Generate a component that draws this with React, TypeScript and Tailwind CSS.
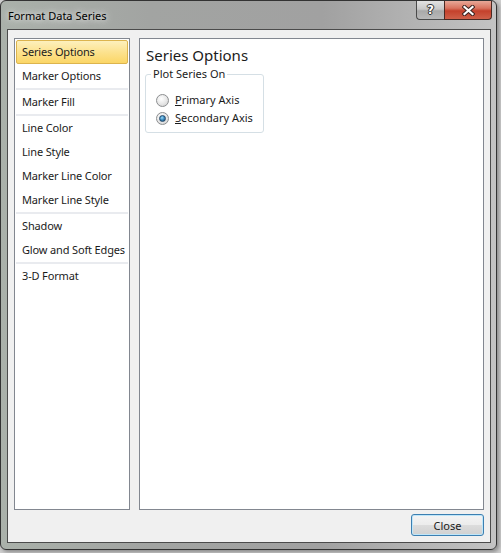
const navItems = [
  { label: "Series Options", sep: false },
  { label: "Marker Options", sep: true },
  { label: "Marker Fill", sep: true },
  { label: "Line Color", sep: false },
  { label: "Line Style", sep: false },
  { label: "Marker Line Color", sep: false },
  { label: "Marker Line Style", sep: true },
  { label: "Shadow", sep: false },
  { label: "Glow and Soft Edges", sep: true },
  { label: "3-D Format", sep: false },
];

const Radio = ({ checked }: { checked?: boolean }) => (
  <div className="w-[13px] h-[13px] rounded-full border border-[#8c8e90] bg-[radial-gradient(circle_at_40%_35%,#ffffff_0%,#e6e6e6_55%,#c9c9c9_100%)] flex items-center justify-center">
    {checked && (
      <div className="w-[7px] h-[7px] rounded-full border border-[#24496a] bg-[radial-gradient(circle_at_40%_35%,#9fdcf8_0%,#3f8fc4_45%,#17476e_100%)]" />
    )}
  </div>
);

export default function App() {
  return (
    <div className="w-[501px] h-[553px] bg-[#cfcfcf] font-['Noto_Sans','Open_Sans',sans-serif] text-[11px] text-[#1b1b1b]">
      <div className="w-[497px] h-[550px] rounded-[6px] border border-[#333333] bg-[linear-gradient(90deg,#aab1aa_0%,#a2a4a2_30%,#a1a1a1_65%,#c3c3c3_100%)] flex flex-col shadow-[2px_2px_4px_rgba(0,0,0,0.35)]">
        {/* title bar */}
        <div className="h-[28px] flex items-start">
          <span className="pl-[7px] pt-[7px] leading-[15px] text-black [text-shadow:0_0_5px_#e8e8e8,0_0_9px_#e0e0e0]">
            Format Data Series
          </span>
          <div className="ml-auto mr-[4px] flex h-[19px]">
            <div className="w-[28px] h-full border border-[#4a4a4a] border-t-0 border-r-0 rounded-bl-[4px] bg-[linear-gradient(180deg,#e2e2e2_0%,#c8c8c8_45%,#a9a9a9_55%,#b9b9b9_100%)] flex items-center justify-center">
              <span className="font-['DejaVu_Sans',sans-serif] font-bold text-[12px] leading-none text-white [text-shadow:0_0_1px_#222,1px_0_0_#333,-1px_0_0_#333,0_1px_0_#333,0_-1px_0_#333]">
                ?
              </span>
            </div>
            <div className="w-[48px] h-full border border-[#4a2a24] border-t-0 rounded-br-[4px] bg-[linear-gradient(180deg,#e8a898_0%,#d9735f_40%,#c4412c_55%,#cf6049_100%)] flex items-center justify-center">
              <svg width="13" height="11" viewBox="0 0 13 11">
                <path d="M2.5 2 L10.5 9 M10.5 2 L2.5 9" stroke="#3b2320" strokeWidth="4.2" strokeLinecap="square" />
                <path d="M2.5 2 L10.5 9 M10.5 2 L2.5 9" stroke="#ffffff" strokeWidth="2.2" strokeLinecap="square" />
              </svg>
            </div>
          </div>
        </div>

        {/* client area */}
        <div className="ml-[6px] mr-[5px] h-[514px] border border-[#4b4b4b] bg-[#f0f0f0] px-[6px] pt-[8px] pb-[6px] flex flex-col">
          <div className="flex gap-[9px] h-[472px]">
            <div className="w-[116px] h-full border border-[#828790] bg-white p-[1px] flex flex-col">
              {navItems.map((item, i) => (
                <div key={item.label}>
                  <div
                    className={
                      i === 0
                        ? "h-[24px] flex items-center pl-[5px] whitespace-nowrap tracking-[-0.15px] border border-[#dcb44e] rounded-[2px] bg-[linear-gradient(180deg,#fdf0bd_0%,#fce28f_50%,#fbd666_100%)]"
                        : "h-[24px] flex items-center pl-[5px] whitespace-nowrap tracking-[-0.15px] border border-transparent"
                    }
                  >
                    {item.label}
                  </div>
                  {item.sep && <div className="h-[2px] bg-[#e9ebef]" />}
                </div>
              ))}
            </div>

            <div className="w-[345px] h-full border border-[#828790] bg-white pl-[5px] pt-[5px]">
              <div className="pl-[1px] text-[15px] leading-[22px] text-[#1b1b1b]">Series Options</div>
              <fieldset className="w-[119px] border border-[#d5dfe5] rounded-[3px] pl-[10px] pt-[9px] pb-[5px]">
                <legend className="ml-[-5px] px-[2px] leading-[16px]">Plot Series On</legend>
                <div className="h-[18px] flex items-center gap-[6px]">
                  <Radio />
                  <span>
                    <span className="underline">P</span>rimary Axis
                  </span>
                </div>
                <div className="h-[18px] flex items-center gap-[6px]">
                  <Radio checked />
                  <span>
                    <span className="underline">S</span>econdary Axis
                  </span>
                </div>
              </fieldset>
            </div>
          </div>

          <div className="mt-[4px] flex justify-end">
            <button className="w-[73px] h-[22px] rounded-[3px] border border-[#3c7fb1] bg-[linear-gradient(180deg,#f4f4f4_0%,#ececec_48%,#dcdcdc_52%,#d0d0d0_100%)] shadow-[inset_0_0_0_1px_#bfe6f9] text-[#1b1b1b] leading-none">
              Close
            </button>
          </div>
        </div>
      </div>
    </div>
  );
}
